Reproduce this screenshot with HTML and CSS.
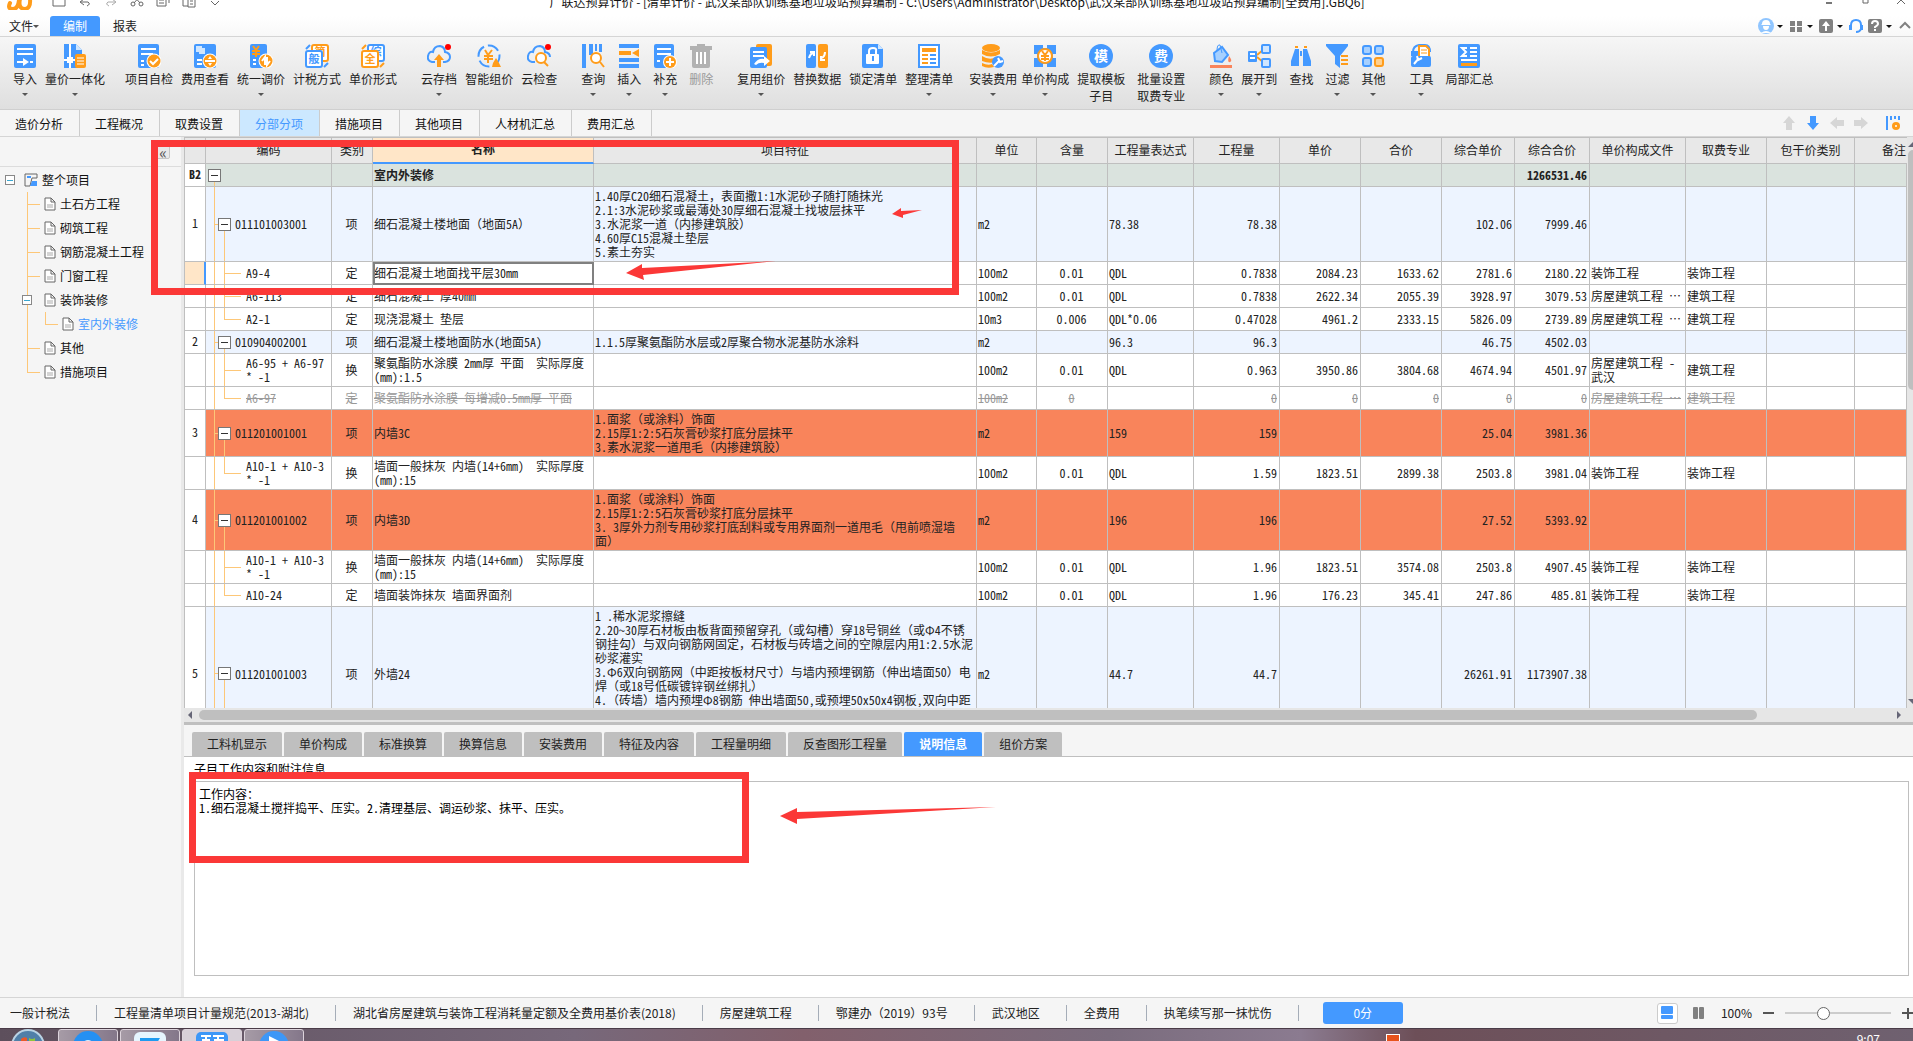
FILE: index.html
```html
<!DOCTYPE html>
<html lang="zh-CN">
<head>
  <meta charset="UTF-8">
  <title>广联达预算计价</title>
  <link rel="stylesheet" href="styles.css">
</head>
<body>
  <!-- 标题栏 -->
  <header class="titlebar">
    <div class="quick">
      <svg class="logo" viewBox="0 0 26 18"><path d="M3 11Q0 17 6 17q5 0 6-9M13 7q-2 9 4 10 7 0 6-10" fill="none" stroke="#ff9c1a" stroke-width="4" stroke-linecap="round"/></svg>
      <svg viewBox="0 0 16 16"><path d="M2 2h12v12H2zM5 2v4h6V2" class="ln"/></svg>
      <svg viewBox="0 0 16 16"><path d="M4 10h7q3 2-1 4M7 7l-4 3 4 3" class="ln"/></svg>
      <svg viewBox="0 0 16 16"><path d="M12 10H5q-3 2 1 4M9 7l4 3-4 3" class="ln faint"/></svg>
      <svg viewBox="0 0 16 16"><path d="M4 3l7 8M12 3l-7 8" class="ln"/><circle cx="4" cy="12" r="2" class="ln"/><circle cx="12" cy="12" r="2" class="ln"/></svg>
      <svg viewBox="0 0 16 16"><path d="M2 4h9v10H2zM5 2h9v9M4 8h5M4 11h5" class="ln"/></svg>
      <svg viewBox="0 0 16 16"><path d="M7 14H2V3h10v3M7 6h7v9H7zM9 9h3M9 12h3" class="ln"/></svg>
      <svg viewBox="0 0 16 16"><path d="M4 9l4 4 4-4" class="ln"/></svg>
    </div>
    <div class="title">广联达预算计价 - [清单计价 - 武汉某部队训练基地垃圾站预算编制 - C:\Users\Administrator\Desktop\武汉某部队训练基地垃圾站预算编制[全费用].GBQ6]</div>
    <div class="wincontrols">
      <svg viewBox="0 0 12 12"><path d="M3 10h6v2H3z" fill="#777"/></svg>
      <svg viewBox="0 0 12 12"><path d="M4 2h5v9H4z" class="ln"/></svg>
      <svg viewBox="0 0 12 12"><path d="M2 4l8 8M10 4l-8 8" class="ln"/></svg>
    </div>
  </header>

  <!-- 菜单 -->
  <nav class="menubar">
    <button type="button" class="menu file">文件<i class="caret"></i></button>
    <button type="button" class="menu active">编制</button>
    <button type="button" class="menu">报表</button>
    <div class="account">
      <svg viewBox="0 0 16 16"><circle cx="8" cy="8" r="8" fill="#8fc5ff"/><path d="M4 6q0-4 4-4t4 4l1 1H3zM5 8h6q0 4-3 4T5 8M3 15q5-4 10 0z" fill="#fff"/></svg><i class="caret dark"></i>
      <svg viewBox="0 0 16 16"><path d="M2 3h5v5H2zM9 3h5v5H9zM2 9h5v5H2zM9 9h5v5H9z" fill="#808080"/></svg><i class="caret dark"></i>
      <svg viewBox="0 0 16 16"><rect x="1" y="1" width="14" height="14" rx="2" fill="#808080"/><path d="M8 3l4 5H9v5H7V8H4z" fill="#fff"/></svg><i class="caret dark"></i>
      <svg viewBox="0 0 16 16"><path d="M3 10V7q0-5 5-5t5 5v4q-1 3-5 3" fill="none" stroke="#4499ff" stroke-width="2"/><path d="M1 7h3v5H1zM12 7h3v5h-3z" class="b"/></svg>
      <svg viewBox="0 0 16 16"><rect x="1" y="1" width="14" height="14" rx="2" fill="#808080"/><path d="M5 6q0-3 3-3t3 3q0 1-3 3v1M8 11v2" fill="none" stroke="#fff" stroke-width="2"/></svg><i class="caret dark"></i>
      <svg viewBox="0 0 16 16"><path d="M3 10l5-5 5 5" fill="none" stroke="#808080" stroke-width="2"/></svg>
    </div>
  </nav>

  <!-- 功能区 -->
  <div class="ribbon">
    <div class="group">
      <button type="button" class="tool"><svg viewBox="0 0 24 24"><rect x="1" width="22" height="24" rx="2" class="b"/><path d="M4 5h16M4 10h16M4 18h7" class="wl"/><path d="M10 14l6 4-6 4z" class="w"/><path d="M17 18h3" class="wl"/></svg>导入<i class="caret"></i></button>
      <button type="button" class="tool"><svg viewBox="0 0 24 24"><path d="M1 0h12l6 6v18H1z" class="b"/><path d="M7 0v24M1 16h12" class="wl"/><path d="M4 13h6v6H4z" class="w"/><path d="M13 0l6 6h-6z" fill="#cfe6ff"/><rect x="12" y="10" width="11" height="14" rx="2" class="o"/><path d="M14 14h7M14 17h7M14 20h7" class="wl thin"/></svg>量价一体化<i class="caret"></i></button>
    </div>
    <div class="group gap-20">
      <button type="button" class="tool"><svg viewBox="0 0 24 24"><rect x="1" width="21" height="24" rx="2" class="b"/><path d="M4 5h15M4 10h12M4 17h3M4 21h3" class="wl"/><circle cx="17" cy="17" r="7.500" class="w"/><circle cx="17" cy="17" r="6.500" class="o"/><path d="M13 17l3 3 5-5" class="wl"/></svg>项目自检</button>
      <button type="button" class="tool"><svg viewBox="0 0 24 24"><rect x="1" width="22" height="24" rx="2" class="b"/><path d="M3 2h6v6H3zM6 4h6v6H6z" fill="#cfe6ff"/><path d="M4 16h5M4 20h5" class="wl"/><circle cx="17" cy="17" r="7.500" class="w"/><circle cx="17" cy="17" r="6.500" class="o"/><path d="M12 17h10" class="wl"/><path d="M15 15l2-3 2 3zM15 19l2 3 2-3z" class="w"/></svg>费用查看</button>
      <button type="button" class="tool"><svg viewBox="0 0 24 24"><rect x="1" width="17" height="24" rx="2" class="b"/><path d="M4 2l3 4 3-4M3 7h8M3 10h8M7 6v7" class="ol"/><path d="M4 16h3M4 20h3" class="wl"/><circle cx="17" cy="17" r="7.500" class="w"/><circle cx="17" cy="17" r="6.500" class="o"/><path d="M13 17l3-4v8M18 13v8l3-4" class="wl"/></svg>统一调价<i class="caret"></i></button>
      <button type="button" class="tool"><svg viewBox="0 0 24 24"><rect x="7" y="1" width="16" height="16" rx="2" class="w ol"/><text x="15" y="12" class="gl o">简</text><rect x="1" y="7" width="16" height="16" rx="2" class="w bl"/><text x="9" y="19" class="gl b">般</text><path d="M19 23l4-4M1 5l4-4" class="bl"/></svg>计税方式</button>
      <button type="button" class="tool"><svg viewBox="0 0 24 24"><rect x="7" y="1" width="16" height="16" rx="2" class="w bl"/><text x="15" y="12" class="gl b">综</text><rect x="1" y="7" width="16" height="16" rx="2" class="w ol"/><text x="9" y="19" class="gl o">全</text><path d="M19 23l4-4M1 5l4-4" class="ol"/></svg>单价形式</button>
    </div>
    <div class="group gap-24">
      <button type="button" class="tool"><svg viewBox="0 0 24 24"><path d="M8 18H5Q0 17 1 12t5-4q1-6 7-6 5 1 5 6 5 1 5 5t-5 5h-2" class="bl"/><path d="M12 10l5 6h-3v7h-4v-7H7z" class="o"/><circle cx="21" cy="3" r="3" fill="#f00"/></svg>云存档<i class="caret"></i></button>
      <button type="button" class="tool"><svg viewBox="0 0 24 24"><circle cx="12" cy="12" r="10.500" class="bl" stroke-dasharray="12 4"/><path d="M8 6l3 5 4-5M7 12h9M7 15h9M11 11v8" class="ol"/><path d="M15 23l1-4 3-5 3 5 2 4z" class="o"/></svg>智能组价</button>
      <button type="button" class="tool"><svg viewBox="0 0 24 24"><path d="M8 18H5Q0 17 1 12t5-4q1-6 7-6 5 1 5 6 5 1 5 5" class="bl"/><circle cx="14" cy="14" r="5" class="w ol"/><path d="M17 18l4 4" class="ol" stroke-width="3"/><circle cx="21" cy="3" r="3" fill="#f00"/></svg>云检查</button>
    </div>
    <div class="group wide gap-24">
      <button type="button" class="tool"><svg viewBox="0 0 24 24"><path d="M1 0h4v24H1zM8 0h4v11H8zM14 0h2v7h-2zM18 0h3v8h-3z" class="b"/><circle cx="15" cy="14" r="5" class="w ol"/><path d="M19 18l4 5" class="ol"/></svg>查询<i class="caret"></i></button>
      <button type="button" class="tool"><svg viewBox="0 0 24 24"><path d="M2 0h20v4H2zM2 14h20v4H2zM2 20h20v4H2z" class="b"/><path d="M2 7h12v4H2zM22 5v8l-7-4z" class="o"/></svg>插入<i class="caret"></i></button>
      <button type="button" class="tool"><svg viewBox="0 0 24 24"><rect x="1" width="20" height="24" rx="2" class="b"/><path d="M4 5h14M4 10h14M4 17h3" class="wl"/><circle cx="17" cy="18" r="7" class="w"/><circle cx="17" cy="18" r="6" class="o"/><path d="M13 18h8M17 14v8" class="wl"/></svg>补充<i class="caret"></i></button>
      <button type="button" class="tool" disabled><svg viewBox="0 0 24 24"><path d="M1 2h7V0h8v2h7v4H1zM3 6h18v16q0 2-2 2H5q-2 0-2-2z" fill="#b2b2b2"/><path d="M8 8v12M12 8v12M16 8v12" class="wl"/></svg>删除</button>
    </div>
    <div class="group gap-24">
      <button type="button" class="tool"><svg viewBox="0 0 24 24"><rect x="7" width="16" height="22" rx="2" class="o"/><rect x="1" y="3" width="17" height="21" rx="2" class="b"/><path d="M4 8h11M4 12h11" class="wl"/><path d="M5 20q4-6 10-5v-3l6 5-6 5v-3q-5-1-8 2z" class="w"/></svg>复用组价<i class="caret"></i></button>
      <button type="button" class="tool"><svg viewBox="0 0 24 24"><rect x="1" width="10" height="24" rx="2" class="b"/><rect x="13" width="10" height="24" rx="2" class="o"/><path d="M4 14q1-4 4-5M5 8h4v4M20 8q0 4-3 6M20 16h-4v-4" class="wl"/></svg>替换数据</button>
      <button type="button" class="tool"><svg viewBox="0 0 24 24"><path d="M3 0h14l5 5v17q0 2-2 2H3q-2 0-2-2V2q0-2 2-2z" class="b"/><path d="M17 0l5 5h-5z" fill="#cfe6ff"/><rect x="5" y="10" width="13" height="10" rx="1" class="w"/><path d="M8 11V7q0-3 4-3t3 3v4" class="wl"/><path d="M11 12h2v5h-2z" class="b"/></svg>锁定清单</button>
      <button type="button" class="tool"><svg viewBox="0 0 24 24"><rect x="2" y="1" width="20" height="22" class="w bl"/><path d="M5 4h14v4H5zM5 10h6v2H5zM5 14h6v2H5zM5 18h6v2H5z" class="o"/><path d="M13 10h6v2h-6zM13 14h6v2h-6zM13 18h6v2h-6z" class="b"/></svg>整理清单<i class="caret"></i></button>
    </div>
    <div class="group tight gap-16">
      <button type="button" class="tool"><svg viewBox="0 0 24 24"><ellipse cx="10" cy="4" rx="9" ry="4" class="o"/><path d="M1 6q9 5 18 0v4q-9 5-18 0zM1 12q8 5 14 1v5q-7 2-14-1zM1 19q6 3 10 1l2 3q-7 2-12-1z" class="o"/><circle cx="17" cy="18" r="6" class="b"/><path d="M13 22l5-5M17 14l2 4 3-1" class="wl"/></svg>安装费用<i class="caret"></i></button>
      <button type="button" class="tool"><svg viewBox="0 0 24 24"><path d="M1 1h9v3h4V1h9v9h-3v4h3v9h-9v-3h-4v3H1v-9h3v-4H1z" class="b"/><circle cx="12" cy="12" r="7" class="w ol"/><path d="M9 7l3 4 3-4M8 12h8M8 15h8M12 11v6" class="ol"/></svg>单价构成<i class="caret"></i></button>
    </div>
    <div class="group wide gap-8">
      <button type="button" class="tool"><svg viewBox="0 0 24 24"><circle cx="12" cy="12" r="12" class="b"/><text x="12" y="17" class="gl big w">模</text></svg>提取模板<br>子目</button>
      <button type="button" class="tool"><svg viewBox="0 0 24 24"><circle cx="12" cy="12" r="12" class="b"/><text x="12" y="17" class="gl big w">费</text></svg>批量设置<br>取费专业</button>
    </div>
    <div class="group gap-24">
      <button type="button" class="tool"><svg viewBox="0 0 24 24"><path d="M5 9l8-6 6 8-6 7-7-1z" fill="#a6d0ff" stroke="#4499ff" stroke-width="2"/><path d="M8 7q0-7 3-6l2 8" class="bl thin"/><path d="M20 12q4 5 1 6t-1-6z" fill="#f9845b"/><path d="M1 21h22v3H1z" fill="#f9845b"/></svg>颜色<i class="caret"></i></button>
      <button type="button" class="tool"><svg viewBox="0 0 24 24"><path d="M10 11l6-5M10 13l6 5" class="ol"/><rect x="1" y="7" width="9" height="11" rx="1" class="b"/><path d="M3 10h5M3 14h5" class="wl"/><rect x="15" y="1" width="8" height="8" rx="1" fill="#cfe6ff" class="bs"/><rect x="15" y="15" width="8" height="8" rx="1" fill="#cfe6ff" class="bs"/></svg>展开到<i class="caret"></i></button>
    </div>
    <div class="group wide gap-12">
      <button type="button" class="tool"><svg viewBox="0 0 24 24"><path d="M6 2h3v2H6zM15 2h3v2h-3z" class="o"/><path d="M6 5h4v17H2v-5zM14 5h4l4 12v5h-8zM11 7h2v5h-2z" class="b"/></svg>查找</button>
      <button type="button" class="tool"><svg viewBox="0 0 24 24"><path d="M1 0h22v2l-8 10v12l-5-4v-8L1 2z" class="b"/><path d="M16 11h7v2h-7zM16 15h7v2h-7zM16 19h7v2h-7z" class="o"/></svg>过滤<i class="caret"></i></button>
      <button type="button" class="tool"><svg viewBox="0 0 24 24"><rect x="2" y="2" width="8" height="8" rx="2" fill="#a6d0ff" class="bs"/><rect x="14" y="2" width="8" height="8" rx="2" fill="#a6d0ff" class="bs"/><rect x="2" y="14" width="8" height="8" rx="2" fill="#a6d0ff" class="bs"/><rect x="14" y="14" width="8" height="8" rx="2" fill="#ffd08f" stroke="#ff9c1a" stroke-width="2"/></svg>其他<i class="caret"></i></button>
    </div>
    <div class="group wide gap-24">
      <button type="button" class="tool"><svg viewBox="0 0 24 24"><path d="M4 8q0-6 6-7h6q5 0 5 7" class="bl"/><path d="M10 2h7l3 3v8H10z" class="w ol"/><path d="M12 6h6M12 9h6" class="ol thin"/><rect x="2" y="12" width="20" height="11" rx="2" class="b"/><path d="M2 12V7h7v6z" class="b"/><path d="M5 20l5-6M8 12l1 4 4-2" class="wl"/></svg>工具<i class="caret"></i></button>
      <button type="button" class="tool"><svg viewBox="0 0 24 24"><rect x="1" width="22" height="24" rx="2" class="b"/><path d="M10 4H5l4 4-4 4h5M13 4h7M13 8h7M13 12h7M4 16h16" class="wl"/><path d="M4 19h16v3H4z" class="o"/></svg>局部汇总</button>
    </div>
  </div>

  <!-- 页签 -->
  <nav class="tabs">
    <a href="#" class="tab">造价分析</a>
    <a href="#" class="tab">工程概况</a>
    <a href="#" class="tab">取费设置</a>
    <a href="#" class="tab active">分部分项</a>
    <a href="#" class="tab">措施项目</a>
    <a href="#" class="tab">其他项目</a>
    <a href="#" class="tab">人材机汇总</a>
    <a href="#" class="tab">费用汇总</a>
    <div class="moves">
      <svg viewBox="0 0 16 16"><path d="M8 1l6 7h-3v7H5V8H2z" fill="#d6d6d6"/></svg>
      <svg viewBox="0 0 16 16"><path d="M8 15l6-7h-3V1H5v7H2z" class="b"/></svg>
      <svg viewBox="0 0 16 16"><path d="M1 8l7-6v3h7v6H8v3z" fill="#d6d6d6"/></svg>
      <svg viewBox="0 0 16 16"><path d="M15 8L8 2v3H1v6h7v3z" fill="#d6d6d6"/></svg>
      <svg class="config" viewBox="0 0 16 16"><path d="M1 1h2v14H1zM5 1h2v4H5zM9 1h2v3H9zM13 1h2v4h-2z" class="b"/><circle cx="11" cy="11" r="4" class="o"/><circle cx="11" cy="11" r="1" class="w"/></svg>
    </div>
  </nav>

  <main class="workspace">
    <!-- 项目树 -->
    <aside class="sidebar">
      <div class="side-head"><button type="button" class="collapse">«</button></div>
      <ul class="tree">
        <li>
          <div class="node root"><button type="button" class="toggle"></button><svg viewBox="0 0 14 14"><path d="M1 1h12v4H8L6 13H1z" class="ln"/><path d="M3 3h4v2H3z" class="b"/><path d="M6 13l2-5h5v5z" class="b"/></svg><a href="#">整个项目</a></div>
          <ul>
            <li class="leaf"><div class="node"><svg viewBox="0 0 12 14"><path d="M1 1h6l4 4v8H1zM7 1v4h4" class="ln page"/><path d="M3 8h6M3 10h6" class="ln faint"/></svg><a href="#">土石方工程</a></div></li>
            <li class="leaf"><div class="node"><svg viewBox="0 0 12 14"><path d="M1 1h6l4 4v8H1zM7 1v4h4" class="ln page"/><path d="M3 8h6M3 10h6" class="ln faint"/></svg><a href="#">砌筑工程</a></div></li>
            <li class="leaf"><div class="node"><svg viewBox="0 0 12 14"><path d="M1 1h6l4 4v8H1zM7 1v4h4" class="ln page"/><path d="M3 8h6M3 10h6" class="ln faint"/></svg><a href="#">钢筋混凝土工程</a></div></li>
            <li class="leaf"><div class="node"><svg viewBox="0 0 12 14"><path d="M1 1h6l4 4v8H1zM7 1v4h4" class="ln page"/><path d="M3 8h6M3 10h6" class="ln faint"/></svg><a href="#">门窗工程</a></div></li>
            <li class="branch"><div class="node parent"><button type="button" class="toggle"></button><svg viewBox="0 0 12 14"><path d="M1 1h6l4 4v8H1zM7 1v4h4" class="ln page"/><path d="M3 8h6M3 10h6" class="ln faint"/></svg><a href="#">装饰装修</a></div>
              <ul>
                <li class="sub"><div class="node"><svg viewBox="0 0 12 14"><path d="M1 1h6l4 4v8H1zM7 1v4h4" class="ln page"/><path d="M3 8h6M3 10h6" class="ln faint"/></svg><a href="#" class="current">室内外装修</a></div></li>
              </ul>
            </li>
            <li class="leaf"><div class="node"><svg viewBox="0 0 12 14"><path d="M1 1h6l4 4v8H1zM7 1v4h4" class="ln page"/><path d="M3 8h6M3 10h6" class="ln faint"/></svg><a href="#">其他</a></div></li>
            <li class="leaf last"><div class="node"><svg viewBox="0 0 12 14"><path d="M1 1h6l4 4v8H1zM7 1v4h4" class="ln page"/><path d="M3 8h6M3 10h6" class="ln faint"/></svg><a href="#">措施项目</a></div></li>
          </ul>
        </li>
      </ul>
    </aside>

    <section class="content">
      <div class="grid-row">
        <div class="grid-view">
          <table class="grid">
            <colgroup>
              <col class="c-no"><col class="c-code"><col class="c-type"><col class="c-name"><col class="c-feat"><col class="c-unit"><col class="c-cont"><col class="c-qty"><col class="c-qty"><col class="c-price"><col class="c-price"><col class="c-cprice"><col class="c-ctotal"><col class="c-file"><col class="c-price"><col class="c-dry"><col>
            </colgroup>
            <thead>
              <tr><th></th><th>编码</th><th>类别</th><th class="sel">名称</th><th>项目特征</th><th>单位</th><th>含量</th><th>工程量表达式</th><th>工程量</th><th>单价</th><th>合价</th><th>综合单价</th><th>综合合价</th><th>单价构成文件</th><th>取费专业</th><th>包干价类别</th><th class="note">备注</th></tr>
            </thead>
            <tbody>
              <tr class="section">
                <td>B2</td><td class="code top"><div><button type="button" class="toggle big"></button></div></td><td></td><td>室内外装修</td><td></td><td></td><td></td><td></td><td></td><td></td><td></td><td></td><td>1266531.46</td><td></td><td></td><td></td><td></td>
              </tr>
              <tr class="item">
                <td>1</td><td class="code"><div><button type="button" class="toggle big"></button>011101003001</div></td><td>项</td><td>细石混凝土楼地面<span class="fw">（</span>地面5A<span class="fw">）</span></td>
                <td>1.40厚C20细石混凝土<span class="fw">，</span>表面撒1:1水泥砂子随打随抹光<br>2.1:3水泥砂浆或最薄处30厚细石混凝土找坡层抹平<br>3.水泥浆一道<span class="fw">（</span>内掺建筑胶<span class="fw">）</span><br>4.60厚C15混凝土垫层<br>5.素土夯实</td>
                <td>m2</td><td></td><td>78.38</td><td>78.38</td><td></td><td></td><td>102.06</td><td>7999.46</td><td></td><td></td><td></td><td></td>
              </tr>
              <tr>
                <td class="cur"></td><td class="code child">A9-4</td><td>定</td><td class="focus">细石混凝土地面找平层30mm</td><td></td>
                <td>100m2</td><td>0.01</td><td>QDL</td><td>0.7838</td><td>2084.23</td><td>1633.62</td><td>2781.6</td><td>2180.22</td><td>装饰工程</td><td>装饰工程</td><td></td><td></td>
              </tr>
              <tr>
                <td></td><td class="code child">A6-113</td><td>定</td><td>细石混凝土 厚40mm</td><td></td>
                <td>100m2</td><td>0.01</td><td>QDL</td><td>0.7838</td><td>2622.34</td><td>2055.39</td><td>3928.97</td><td>3079.53</td><td>房屋建筑工程 ⋯</td><td>建筑工程</td><td></td><td></td>
              </tr>
              <tr>
                <td></td><td class="code child last">A2-1</td><td>定</td><td>现浇混凝土 垫层</td><td></td>
                <td>10m3</td><td>0.006</td><td>QDL*0.06</td><td>0.47028</td><td>4961.2</td><td>2333.15</td><td>5826.09</td><td>2739.89</td><td>房屋建筑工程 ⋯</td><td>建筑工程</td><td></td><td></td>
              </tr>
              <tr class="item">
                <td>2</td><td class="code"><div><button type="button" class="toggle big"></button>010904002001</div></td><td>项</td><td>细石混凝土楼地面防水(地面5A)</td><td>1.1.5厚聚氨酯防水层或2厚聚合物水泥基防水涂料</td>
                <td>m2</td><td></td><td>96.3</td><td>96.3</td><td></td><td></td><td>46.75</td><td>4502.03</td><td></td><td></td><td></td><td></td>
              </tr>
              <tr>
                <td></td><td class="code child">A6-95 + A6-97<br>* -1</td><td>换</td><td>聚氨酯防水涂膜 2mm厚 平面&nbsp; 实际厚度<br>(mm):1.5</td><td></td>
                <td>100m2</td><td>0.01</td><td>QDL</td><td>0.963</td><td>3950.86</td><td>3804.68</td><td>4674.94</td><td>4501.97</td><td>房屋建筑工程 -<br>武汉</td><td>建筑工程</td><td></td><td></td>
              </tr>
              <tr class="void">
                <td></td><td class="code child last">A6-97</td><td>定</td><td>聚氨酯防水涂膜 每增减0.5mm厚 平面</td><td></td>
                <td>100m2</td><td>0</td><td></td><td>0</td><td>0</td><td>0</td><td>0</td><td>0</td><td>房屋建筑工程 ⋯</td><td>建筑工程</td><td></td><td></td>
              </tr>
              <tr class="item marked">
                <td>3</td><td class="code"><div><button type="button" class="toggle big"></button>011201001001</div></td><td>项</td><td>内墙3C</td>
                <td>1.面浆<span class="fw">（</span>或涂料<span class="fw">）</span>饰面<br>2.15厚1:2:5石灰膏砂浆打底分层抹平<br>3.素水泥浆一道甩毛<span class="fw">（</span>内掺建筑胶<span class="fw">）</span></td>
                <td>m2</td><td></td><td>159</td><td>159</td><td></td><td></td><td>25.04</td><td>3981.36</td><td></td><td></td><td></td><td></td>
              </tr>
              <tr>
                <td></td><td class="code child last">A10-1 + A10-3<br>* -1</td><td>换</td><td>墙面一般抹灰 内墙(14+6mm)&nbsp; 实际厚度<br>(mm):15</td><td></td>
                <td>100m2</td><td>0.01</td><td>QDL</td><td>1.59</td><td>1823.51</td><td>2899.38</td><td>2503.8</td><td>3981.04</td><td>装饰工程</td><td>装饰工程</td><td></td><td></td>
              </tr>
              <tr class="item marked">
                <td>4</td><td class="code"><div><button type="button" class="toggle big"></button>011201001002</div></td><td>项</td><td>内墙3D</td>
                <td>1.面浆<span class="fw">（</span>或涂料<span class="fw">）</span>饰面<br>2.15厚1:2:5石灰膏砂浆打底分层抹平<br>3. 3厚外力剂专用砂浆打底刮料或专用界面剂一道甩毛<span class="fw">（</span>甩前喷湿墙<br>面<span class="fw">）</span></td>
                <td>m2</td><td></td><td>196</td><td>196</td><td></td><td></td><td>27.52</td><td>5393.92</td><td></td><td></td><td></td><td></td>
              </tr>
              <tr>
                <td></td><td class="code child">A10-1 + A10-3<br>* -1</td><td>换</td><td>墙面一般抹灰 内墙(14+6mm)&nbsp; 实际厚度<br>(mm):15</td><td></td>
                <td>100m2</td><td>0.01</td><td>QDL</td><td>1.96</td><td>1823.51</td><td>3574.08</td><td>2503.8</td><td>4907.45</td><td>装饰工程</td><td>装饰工程</td><td></td><td></td>
              </tr>
              <tr>
                <td></td><td class="code child last">A10-24</td><td>定</td><td>墙面装饰抹灰 墙面界面剂</td><td></td>
                <td>100m2</td><td>0.01</td><td>QDL</td><td>1.96</td><td>176.23</td><td>345.41</td><td>247.86</td><td>485.81</td><td>装饰工程</td><td>装饰工程</td><td></td><td></td>
              </tr>
              <tr class="item tall">
                <td>5</td><td class="code"><div><button type="button" class="toggle big"></button>011201001003</div></td><td>项</td><td>外墙24</td>
                <td>1 .稀水泥浆擦缝<br>2.20~30厚石材板由板背面预留穿孔<span class="fw">（</span>或勾槽<span class="fw">）</span>穿18号铜丝<span class="fw">（</span>或Φ4不锈<br>钢挂勾<span class="fw">）</span>与双向钢筋网固定<span class="fw">，</span>石材板与砖墙之间的空隙层内用1:2.5水泥<br>砂浆灌实<br>3.Φ6双向钢筋网<span class="fw">（</span>中距按板材尺寸<span class="fw">）</span>与墙内预埋钢筋<span class="fw">（</span>伸出墙面50<span class="fw">）</span>电<br>焊<span class="fw">（</span>或18号低碳镀锌钢丝绑扎<span class="fw">）</span><br>4.<span class="fw">（</span>砖墙<span class="fw">）</span>墙内预埋Φ8钢筋 伸出墙面50,或预埋50x50x4钢板,双向中距</td>
                <td>m2</td><td></td><td>44.7</td><td>44.7</td><td></td><td></td><td>26261.91</td><td>1173907.38</td><td></td><td></td><td></td><td></td>
              </tr>
            </tbody>
          </table>
        </div>
        <div class="vscroll"><i class="up"></i><span></span><i class="down"></i></div>
      </div>
      <div class="hscroll"><i class="left"></i><div class="track"><span></span></div><i class="right"></i></div>

      <!-- 下方属性区 -->
      <div class="detail">
        <div class="detail-tabs">
          <button type="button">工料机显示</button>
          <button type="button">单价构成</button>
          <button type="button">标准换算</button>
          <button type="button">换算信息</button>
          <button type="button">安装费用</button>
          <button type="button">特征及内容</button>
          <button type="button">工程量明细</button>
          <button type="button">反查图形工程量</button>
          <button type="button" class="active">说明信息</button>
          <button type="button">组价方案</button>
        </div>
        <div class="detail-body">
          <label for="work">子目工作内容和附注信息</label>
          <textarea id="work" readonly>工作内容：
1.细石混凝土搅拌捣平、压实。2.清理基层、调运砂浆、抹平、压实。</textarea>
        </div>
      </div>
    </section>
  </main>

  <!-- 状态栏 -->
  <footer class="statusbar">
    <span>一般计税法</span>
    <span>工程量清单项目计量规范(2013-湖北)</span>
    <span>湖北省房屋建筑与装饰工程消耗量定额及全费用基价表(2018)</span>
    <span>房屋建筑工程</span>
    <span>鄂建办（2019）93号</span>
    <span>武汉地区</span>
    <span>全费用</span>
    <span>执笔续写那一抹忧伤</span>
    <button type="button" class="score">0分</button>
    <div class="zoom">
      <button type="button" class="view on"><svg viewBox="0 0 12 14"><rect width="12" height="8" rx="1" class="b"/><rect y="9" width="12" height="4" rx="1" class="b"/></svg></button>
      <button type="button" class="view"><svg viewBox="0 0 12 14"><rect y="1" width="5" height="12" rx="1" fill="#808080"/><rect x="6" y="1" width="5" height="12" rx="1" fill="#808080"/></svg></button>
      <label for="scale">100%</label>
      <i class="minus"></i>
      <input id="scale" type="range" min="0" max="100" value="34">
      <i class="plus"></i>
    </div>
  </footer>

  <!-- 任务栏 -->
  <div class="taskbar">
    <div class="start"><svg viewBox="0 0 34 13"><circle cx="17" cy="17" r="16" fill="#4f7fa8" stroke="#b9d3e4" stroke-width="2"/><path d="M10 10q3-3 6-1v4h-6z" fill="#e8582a"/><path d="M18 9q3 2 6 0v4h-6z" fill="#8fc33c"/></svg></div>
    <div class="app"><svg viewBox="0 0 34 13"><circle cx="17" cy="16" r="15" fill="#2590f2"/><circle cx="17" cy="16" r="6" fill="#d9efff"/></svg></div>
    <div class="app"><svg viewBox="0 0 34 13"><rect x="1" y="2" width="32" height="20" rx="6" fill="#e6f6ff"/><path d="M7 8h20l-3 5H7z" fill="#1f9bf0"/></svg></div>
    <div class="app lit"><svg viewBox="0 0 34 13"><rect x="1" y="2" width="32" height="20" rx="5" fill="#3d97f7"/><path d="M6 6h10M11 6v7M7 10h8M18 6h11M19 10h9v3M23 6v4" stroke="#fff" stroke-width="2" fill="none"/></svg></div>
    <div class="app"><svg viewBox="0 0 34 13"><circle cx="17" cy="16" r="15" fill="#3d97f7"/><path d="M12 6l14 7H12z" fill="#fff"/></svg></div>
    <span class="tray"></span>
    <span class="clock">9:07</span>
  </div>

  <!-- 红色批注 -->
  <div class="mark mark-row"></div>
  <div class="mark mark-note"></div>
  <svg class="arrow arrow-feat" viewBox="0 0 30 10"><path d="M0 6l9-6v3l21-1-19 5v3z"/></svg>
  <svg class="arrow arrow-name" viewBox="0 0 150 20"><path d="M0 12l16-9v4L150 0 17 14l1 5z"/></svg>
  <svg class="arrow arrow-note" viewBox="0 0 216 18"><path d="M0 10l17-8v4L216 1 17 13v5z"/></svg>
</body>
</html>
```
FILE: styles.css
```css
* {
  box-sizing: border-box;
}

body {
  position: relative;
  display: flex;
  flex-direction: column;
  height: 100vh;
  margin: 0;
  overflow: hidden;
  background: #f5f5f5;
  color: #222;
  font: 12px/16px "Noto Sans CJK SC", sans-serif;
}

button {
  margin: 0;
  padding: 0;
  border: 0;
  background: none;
  color: inherit;
  font: inherit;
}

a {
  color: inherit;
  text-decoration: none;
}

ul {
  margin: 0;
  padding: 0;
  list-style: none;
}

svg {
  flex: none;
}

/* 图标颜色 */
.b { fill: #4499ff; }
.o { fill: #ff9c1a; }
.w { fill: #fff; }
.bl { stroke: #4499ff; stroke-width: 2; }
.ol { stroke: #ff9c1a; stroke-width: 2; }
.bl:not(.w), .ol:not(.w) { fill: none; }
.bs { stroke: #4499ff; stroke-width: 2; }
.wl { fill: none; stroke: #fff; stroke-width: 2; }
.thin { stroke-width: 1; }
.ln { fill: none; stroke: #666; stroke-width: 1; }
.page { fill: #fff; }
.faint { stroke: #aaa; }

.gl {
  font-size: 11px;
  font-weight: bold;
  text-anchor: middle;
}

.gl.big {
  font-size: 14px;
}

.caret {
  display: inline-block;
  border: 3px solid transparent;
  border-top-color: #555;
  border-bottom: 0;
}

.caret.dark {
  border-top-color: #111;
}

/* 标题栏 */
.titlebar {
  display: flex;
  justify-content: space-between;
  height: 16px;
  overflow: hidden;
  background: #fff;
}

.titlebar > * {
  height: 20px;
  margin-top: -8px;
}

.quick {
  display: flex;
  flex: 1;
  gap: 10px;
  padding-left: 7px;
}

.quick svg {
  width: 16px;
  height: 16px;
}

.quick .logo {
  width: 26px;
  height: 18px;
  margin-right: 8px;
}

.title {
  color: #111;
  line-height: 20px;
  white-space: nowrap;
}

.wincontrols {
  display: flex;
  flex: 1;
  justify-content: flex-end;
  gap: 24px;
  padding-right: 6px;
}

.wincontrols svg {
  width: 12px;
  height: 12px;
}

/* 菜单 */
.menubar {
  display: flex;
  height: 21px;
  border-bottom: 1px solid #d5d5d5;
  background: linear-gradient(#fff, #f8f8f8);
}

.menu {
  padding: 0 13px;
  line-height: 20px;
}

.menu.file {
  display: flex;
  align-items: center;
  width: 50px;
  padding: 0 9px;
}

.menu.active {
  border-radius: 3px 3px 0 0;
  background: #4499ff;
  color: #fff;
}

.account {
  display: flex;
  align-items: center;
  gap: 3px;
  margin-left: auto;
}

.account svg {
  width: 16px;
  height: 16px;
}

.account .caret {
  margin-right: 2px;
}

/* 功能区 */
.ribbon {
  display: flex;
  height: 73px;
  padding: 7px 0 0 13px;
  border-bottom: 1px solid #cfcfcf;
  background: linear-gradient(#f6f6f6, #dfdfdf);
}

.group {
  display: flex;
  align-items: flex-start;
  gap: 8px;
}

.group.wide { gap: 12px; }
.group.tight { gap: 4px; }

.gap-8 { margin-left: 8px; }
.gap-12 { margin-left: 12px; }
.gap-16 { margin-left: 16px; }
.gap-20 { margin-left: 20px; }
.gap-24 { margin-left: 24px; }

.tool {
  line-height: 17px;
  text-align: center;
  white-space: nowrap;
}

.tool svg {
  display: block;
  width: 24px;
  height: 24px;
  margin: 0 auto 2px;
}

.tool .caret {
  display: block;
  width: 6px;
  margin: 6px auto 0;
}

.tool:disabled {
  color: #999;
}

/* 页签 */
.tabs {
  display: flex;
  height: 27px;
  border-bottom: 1px solid #d5d5d5;
}

.tab {
  padding: 0 16px 0 15px;
  border-right: 1px solid #ccc;
  color: #111;
  line-height: 27px;
}

.tab.active {
  background: #cce8ff;
  color: #4499ff;
}

.moves {
  display: flex;
  align-items: center;
  gap: 8px;
  margin-left: auto;
  padding-right: 12px;
}

.moves svg {
  width: 16px;
  height: 16px;
}

.moves .config {
  margin-left: 8px;
}

.workspace {
  display: flex;
  flex: 1;
  min-height: 0;
}

/* 项目树 */
.sidebar {
  width: 184px;
  border-right: 3px solid #e9e9e9;
}

.side-head {
  display: flex;
  justify-content: flex-end;
  height: 30px;
  padding: 8px 11px 0 0;
  border-bottom: 1px solid #dcdcdc;
}

.collapse {
  width: 14px;
  height: 14px;
  border: 1px solid #c6c6c6;
  border-radius: 2px;
  background: #e9e9e9;
  color: #555;
  font-size: 16px;
  line-height: 8px;
}

.tree {
  padding-top: 1px;
}

.node {
  display: flex;
  align-items: center;
  height: 24px;
  gap: 4px;
  padding-left: 44px;
  color: #111;
}

.node svg {
  width: 12px;
  height: 14px;
}

.node.root {
  padding-left: 5px;
}

.node.root svg {
  width: 14px;
  margin-left: 5px;
}

.node.parent {
  padding-left: 22px;
}

.node.parent svg {
  margin-left: 8px;
}

.sub .node {
  padding-left: 62px;
}

.current {
  color: #4499ff;
}

.toggle {
  flex: none;
  width: 10px;
  height: 10px;
  border: 1px solid #888;
  background: linear-gradient(#3aa7d0, #3aa7d0) center / 6px 1px no-repeat #fff;
}

.leaf {
  background:
    linear-gradient(#fdc778, #fdc778) 27px 0 / 1px 100% no-repeat,
    linear-gradient(#fdc778, #fdc778) 27px 12px / 13px 1px no-repeat;
}

.leaf.last {
  background-size: 1px 12px, 13px 1px;
}

.branch {
  background: linear-gradient(#fdc778, #fdc778) 27px 0 / 1px 100% no-repeat;
}

.sub {
  background:
    linear-gradient(#fdc778, #fdc778) 45px 0 / 1px 12px no-repeat,
    linear-gradient(#fdc778, #fdc778) 45px 12px / 13px 1px no-repeat;
}

/* 清单表格 */
.content {
  display: flex;
  flex: 1;
  flex-direction: column;
  min-width: 0;
}

.grid-row {
  display: flex;
  flex: 1;
  min-height: 0;
}

.grid-view {
  flex: 1;
  min-width: 0;
  overflow: hidden;
  border-top: 1px solid #bfbfbf;
  border-left: 1px solid #bfbfbf;
  background: #fff;
}

.grid {
  width: 100%;
  table-layout: fixed;
  border-collapse: separate;
  border-spacing: 0;
  font-feature-settings: "hwid" 1;
  line-height: 14px;
}

/* 全角标点 */
.fw {
  font-feature-settings: normal;
}

.c-no { width: 21px; }
.c-code { width: 126px; }
.c-type { width: 41px; }
.c-name { width: 221px; }
.c-feat { width: 383px; }
.c-unit { width: 60px; }
.c-cont { width: 71px; }
.c-qty { width: 86px; }
.c-price { width: 81px; }
.c-cprice { width: 73px; }
.c-ctotal { width: 75px; }
.c-file { width: 96px; }
.c-dry { width: 88px; }

th,
td {
  overflow: hidden;
  border-right: 1px solid #bfbfbf;
  border-bottom: 1px solid #bfbfbf;
  white-space: nowrap;
}

th {
  height: 26px;
  padding: 0 0 2px;
  background: #e8e8e8;
  font-weight: normal;
}

th.sel {
  border-bottom: 2px solid #4499ff;
  background: #ffe6c8;
  font-weight: bold;
}

th.note {
  padding-right: 1px;
  border-right: 0;
  text-align: right;
}

td {
  height: 23px;
  padding: 2px 2px 2px 1px;
}

td:nth-child(1),
td:nth-child(3),
td:nth-child(7) {
  text-align: center;
}

td:nth-child(1) {
  padding: 0 0 2px;
}

td:nth-child(n+9):nth-child(-n+13) {
  text-align: right;
}

.item td:not(:first-child) {
  background-color: #edf4ff;
}

.item.marked td:not(:first-child) {
  background-color: #f9845b;
}

.section td {
  font-weight: bold;
}

.section td:not(:first-child) {
  background-color: #dae3de;
}

.void td {
  color: #999;
  text-decoration: line-through;
}

td.cur {
  border-right: 2px solid #4499ff;
  background: #ffe6c8;
}

td.focus {
  outline: 2px solid #808080;
  outline-offset: -2px;
}

.tall td {
  height: 134px;
}

.tall td:nth-child(5) {
  vertical-align: top;
}

/* 编码列的层级连线 */
.code {
  background-image:
    linear-gradient(#fdc778, #fdc778),
    linear-gradient(#fdc778, #fdc778),
    linear-gradient(#fdc778, #fdc778);
  background-position: 8px 0, 8px 50%, 18px 100%;
  background-repeat: no-repeat;
  background-size: 1px 100%, 6px 1px, 1px 50%;
}

.code div {
  display: flex;
  align-items: center;
  gap: 4px;
  padding-left: 11px;
}

.code.top {
  background-position: 8px 100%;
  background-size: 1px 50%, 0 0, 0 0;
}

.code.top div {
  padding-left: 1px;
}

.code.child {
  padding-left: 40px;
  background-position: 8px 0, 18px 50%, 18px 0;
  background-size: 1px 100%, 17px 1px, 1px 100%;
}

.code.child.last {
  background-size: 1px 100%, 17px 1px, 1px 50%;
}

.toggle.big {
  width: 13px;
  height: 13px;
  border-color: #777;
  background-image: linear-gradient(#333, #333);
  background-size: 7px 1px;
}

/* 滚动条 */
.vscroll {
  display: flex;
  flex-direction: column;
  width: 6px;
  overflow: hidden;
  background: #e6e6e6;
}

.vscroll span {
  height: 42%;
  margin: 3px 0 auto 1px;
  border-radius: 5px 0 0 5px;
  background: #bfbfbf;
}

.up,
.down {
  width: 0;
  margin: 5px 0 0 1px;
  border: 5px solid transparent;
  border-top: 0;
  border-bottom-color: #667;
}

.down {
  margin: 0 0 4px 1px;
  border-top: 5px solid #667;
  border-bottom: 0;
}

.hscroll {
  display: flex;
  align-items: center;
  height: 14px;
  padding: 0 12px 0 4px;
  background: #e6e6e6;
}

.track {
  flex: 1;
  padding: 0 4px 0 7px;
}

.track span {
  display: block;
  width: 92%;
  height: 10px;
  border-radius: 5px;
  background: #bfbfbf;
}

.left,
.right {
  border: 4px solid transparent;
  border-right-color: #667;
  border-left: 0;
}

.right {
  border-right: 0;
  border-left: 4px solid #667;
}

/* 属性区 */
.detail {
  display: flex;
  flex-direction: column;
  height: 275px;
  border-top: 3px solid #bfbfbf;
}

.detail-tabs {
  display: flex;
  gap: 2px;
  padding: 7px 0 0 8px;
  border-bottom: 1px solid #bfbfbf;
}

.detail-tabs button {
  height: 24px;
  padding: 0 15px;
  border-radius: 2px 2px 0 0;
  background: #bfbfbf;
}

.detail-tabs .active {
  background: #4499ff;
  color: #fff;
  font-weight: bold;
}

.detail-body {
  display: flex;
  flex: 1;
  flex-direction: column;
  gap: 4px;
  padding: 4px 4px 21px 10px;
  background: #fff;
  color: #000;
}

.detail-body textarea {
  flex: 1;
  padding: 5px 4px;
  border: 1px solid #bfbfbf;
  outline: 0;
  background: #fff;
  color: #000;
  font: inherit;
  font-feature-settings: "hwid" 1;
  line-height: 14px;
  resize: none;
}

/* 状态栏 */
.statusbar {
  display: flex;
  align-items: center;
  height: 31px;
  border-top: 1px solid #d5d5d5;
}

.statusbar > span {
  padding: 0 26px 0 17px;
  border-right: 1px solid #a5adb8;
  white-space: nowrap;
}

.statusbar > span:first-child {
  padding-left: 10px;
}

.score {
  width: 80px;
  height: 22px;
  margin-left: 24px;
  border-radius: 3px;
  background: #4499ff;
  color: #fff;
}

.zoom {
  display: flex;
  align-items: center;
  gap: 11px;
  margin-left: auto;
}

.view {
  display: flex;
  align-items: center;
  justify-content: center;
  width: 21px;
  height: 21px;
}

.view.on {
  border: 1px solid #ccc;
  border-radius: 3px;
  background: #fff;
}

.view svg {
  width: 12px;
  height: 14px;
}

.minus,
.plus {
  width: 11px;
  height: 11px;
  background: linear-gradient(#555, #555) center / 100% 2px no-repeat;
}

.plus {
  background:
    linear-gradient(#555, #555) center / 100% 2px no-repeat,
    linear-gradient(#555, #555) center / 2px 100% no-repeat;
}

.zoom input {
  width: 106px;
  height: 14px;
  margin: 0;
  appearance: none;
  background: linear-gradient(#ccc, #ccc) center / 100% 2px no-repeat;
}

.zoom input::-webkit-slider-thumb {
  width: 13px;
  height: 13px;
  appearance: none;
  border: 1px solid #666;
  border-radius: 50%;
  background: #fff;
}

/* 任务栏 */
.taskbar {
  display: flex;
  height: 13px;
  overflow: hidden;
  border-top: 1px solid #4a3c48;
  background: linear-gradient(90deg, #5d4f5c, #77687a 30%, #82606c 42%, #7a6c7d 58%, #8b7b90 68%, #6d4f58 74%, #6f6170);
}

.start,
.app {
  width: 60px;
  height: 16px;
  margin-right: 2px;
  text-align: center;
}

.start {
  width: 56px;
}

.app {
  border: 1px solid #ddd4dc;
  border-radius: 3px;
  background: linear-gradient(90deg, #a69ba6, #84778a);
}

.app.lit {
  background: #d8d0d8;
}

.taskbar svg {
  width: 34px;
  height: 13px;
}

.tray {
  width: 14px;
  height: 8px;
  margin: 5px 0 0 auto;
  border: 1px solid #fff;
  background: #e8531c;
}

.clock {
  width: 513px;
  padding: 2px 33px 0 0;
  color: #fff;
  text-align: right;
}

/* 红色批注框和箭头 */
.mark {
  position: absolute;
  border: 7px solid #fb3837;
}

.mark-row {
  top: 140px;
  left: 151px;
  width: 808px;
  height: 155px;
}

.mark-note {
  top: 772px;
  left: 189px;
  width: 560px;
  height: 91px;
}

.arrow {
  position: absolute;
  fill: #fb3837;
}

.arrow-feat {
  top: 208px;
  left: 892px;
  width: 30px;
}

.arrow-name {
  top: 261px;
  left: 626px;
  width: 150px;
}

.arrow-note {
  top: 806px;
  left: 780px;
  width: 216px;
}
```
